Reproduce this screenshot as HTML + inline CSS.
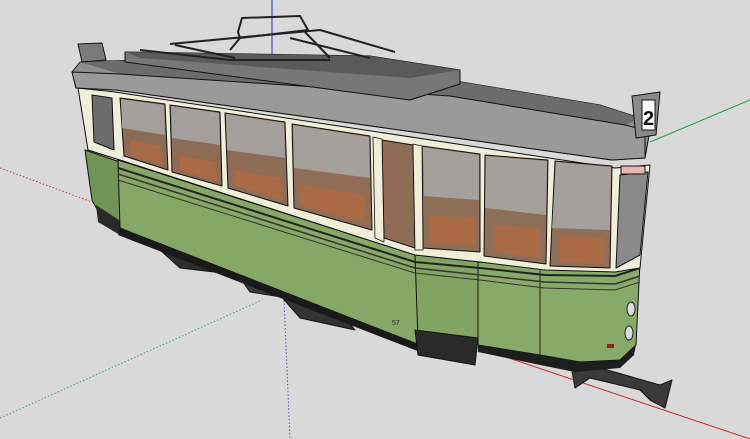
<!DOCTYPE html>
<html><head><style>
html,body{margin:0;padding:0;background:#d9d9d9;}
svg{display:block;}
</style></head><body>
<svg width="750" height="439" viewBox="0 0 750 439" xmlns="http://www.w3.org/2000/svg" stroke-linejoin="round">
<rect width="750" height="439" fill="#d9d9d9"/>
<!-- axes -->
<line x1="272" y1="0" x2="272" y2="62" stroke="#2a2ad0" stroke-width="1"/>
<line x1="284" y1="300" x2="290" y2="439" stroke="#5050c0" stroke-width="1" stroke-dasharray="1.5,2"/>
<line x1="0" y1="168" x2="100" y2="205" stroke="#b04040" stroke-width="1" stroke-dasharray="1.5,2"/>
<line x1="470" y1="345" x2="750" y2="439" stroke="#d02020" stroke-width="1"/>
<line x1="650" y1="142" x2="750" y2="100" stroke="#20a040" stroke-width="1"/>
<line x1="0" y1="418" x2="262" y2="300" stroke="#40a060" stroke-width="1" stroke-dasharray="1.5,2"/>

<!-- underframe boxes -->
<polygon points="160,250 215,262 240,275 180,268" fill="#2e2e2e" stroke="#111"/>
<polygon points="240,278 280,290 300,300 250,292" fill="#3a3a3a" stroke="#111"/>
<polygon points="280,295 340,312 355,330 300,318" fill="#333" stroke="#111"/>
<!-- coupler -->
<polygon points="570,360 590,365 660,385 672,380 665,408 650,400 640,390 590,378 575,388" fill="#3a3a3a" stroke="#111"/>

<!-- lower green body left end -->
<polygon points="85,150 120,162 125,230 100,215 92,200" fill="#6f9455" stroke="#111"/>
<polygon points="96,205 122,222 120,235 98,222" fill="#2a2a2a"/>
<!-- main green side -->
<polygon points="118,160 415,255 420,345 120,228" fill="#86a866" stroke="#111"/>
<!-- black skirt -->
<polygon points="120,228 420,345 420,352 118,235" fill="#1a1a1a"/>
<!-- door lower box -->
<polygon points="415,255 480,262 478,345 418,340" fill="#82a462" stroke="#111"/>
<polygon points="415,330 478,338 475,365 418,355" fill="#2a2a2a" stroke="#111"/>
<!-- right end green -->
<polygon points="478,262 545,268 615,268 640,262 636,345 620,360 580,362 540,355 478,345" fill="#88aa68" stroke="#111"/>
<polygon points="478,345 540,355 580,362 620,360 636,345 634,355 620,368 575,372 540,365 478,352" fill="#1e1e1e"/>
<line x1="540" y1="268" x2="540" y2="356" stroke="#222"/>
<!-- stripes along window sill -->
<polyline points="118,168 415,262 480,268 545,275 615,276 640,268" fill="none" stroke="#222" stroke-width="2"/>
<polyline points="118,174 415,268 480,275 545,282 615,284 640,276" fill="none" stroke="#333" stroke-width="1.5"/>
<polyline points="118,180 415,273 480,280 545,288 615,290 640,282" fill="none" stroke="#333" stroke-width="1"/>
<!-- headlights -->
<ellipse cx="631" cy="309" rx="4" ry="7" fill="#ddd" stroke="#222"/>
<ellipse cx="629" cy="333" rx="4" ry="7" fill="#ddd" stroke="#222"/>
<rect x="607" y="344" width="7" height="4" fill="#8a2020"/>
<text x="392" y="325" font-family="Liberation Sans,sans-serif" font-size="7" fill="#223">57</text>

<!-- window zone cream frame -->
<polygon points="78,88 115,92 615,168 650,165 640,268 615,272 545,270 480,262 415,255 120,160 88,150" fill="#efeed8" stroke="#111"/>
<!-- glass panes with interior -->
<g stroke="#111" stroke-width="1">
<polygon points="120,98 165,104 168,170 124,156" fill="#8c6a55"/>
<polygon points="170,105 220,112 222,186 172,172" fill="#8d6b55"/>
<polygon points="225,113 285,122 288,206 228,188" fill="#8f6c56"/>
<polygon points="292,124 370,136 372,230 294,208" fill="#906d57"/>
<polygon points="382,140 413,145 415,248 384,238" fill="#8f6c56"/>
<polygon points="422,146 480,154 480,252 423,248" fill="#8f6f58"/>
<polygon points="485,155 548,160 546,264 484,256" fill="#8e6e58"/>
<polygon points="555,161 612,166 610,268 550,266" fill="#8e6e58"/>
<polygon points="620,175 648,172 640,255 616,268" fill="#8a8a8a"/>
<polygon points="92,95 112,98 114,150 94,142" fill="#6c6c6c"/>
</g>
<!-- glass upper grey -->
<g fill="#a9a9a9" opacity="0.85">
<polygon points="121,99 164,105 165,135 122,128"/>
<polygon points="171,106 219,113 220,145 172,138"/>
<polygon points="226,114 284,123 285,158 227,150"/>
<polygon points="293,125 369,137 370,178 294,168"/>
<polygon points="423,147 479,155 479,200 424,196"/>
<polygon points="486,156 547,161 546,215 485,208"/>
<polygon points="556,162 611,167 610,230 552,228"/>
</g>
<!-- seats hints -->
<g fill="#b06a40" opacity="0.8">
<polygon points="130,140 160,146 162,165 130,155"/>
<polygon points="180,155 215,162 218,182 180,170"/>
<polygon points="235,170 280,178 282,200 236,186"/>
<polygon points="300,185 365,195 366,222 300,205"/>
<polygon points="430,215 475,218 476,245 430,243"/>
<polygon points="495,225 540,228 540,258 495,252"/>
<polygon points="560,235 605,238 604,264 560,262"/>
</g>
<!-- pillars -->
<g fill="#efeed8" stroke="#111" stroke-width="0.8">
<polygon points="373,137 382,139 384,242 375,238"/>
<polygon points="413,144 422,146 423,250 415,250"/>
</g>

<!-- roof -->
<polygon points="72,72 80,62 200,58 450,80 600,105 640,118 650,130 645,158 612,160 116,90 76,88" fill="#8e8e8e" stroke="#111"/>
<polygon points="80,62 200,58 450,80 600,105 640,118 625,125 450,96 120,74" fill="#6c6c6c"/>
<polygon points="72,72 120,74 450,96 625,125 645,130 645,158 612,160 116,90 76,88" fill="#9a9a9a" stroke="#111"/>
<!-- clerestory -->
<polygon points="125,52 370,56 460,70 460,84 410,100 125,62" fill="#777" stroke="#111"/>
<polygon points="125,52 370,56 460,70 410,78 140,58" fill="#5a5a5a"/>
<!-- end destination boxes -->
<polygon points="78,44 102,43 106,60 82,62" fill="#7a7a7a" stroke="#111"/>
<polygon points="632,96 660,92 656,135 636,138" fill="#8a8a8a" stroke="#111"/>
<rect x="642" y="100" width="13" height="30" fill="#fff" stroke="#111"/>
<text x="643" y="125" font-family="Liberation Sans,sans-serif" font-size="20" font-weight="bold" fill="#111">2</text>
<rect x="621" y="166" width="24" height="8" fill="#e8b8b0" stroke="#111"/>
<!-- pantograph -->
<g fill="none" stroke="#222" stroke-width="2">
<path d="M238,32 L242,18 L300,16 L308,30 L240,38 Z"/>
<path d="M170,44 L320,30 L395,52"/>
<path d="M240,38 L230,50 M305,32 L330,58 M175,45 L235,58 M290,38 L370,58"/>
<path d="M140,50 L230,60 L330,60"/>
</g>
</svg>
</body></html>
